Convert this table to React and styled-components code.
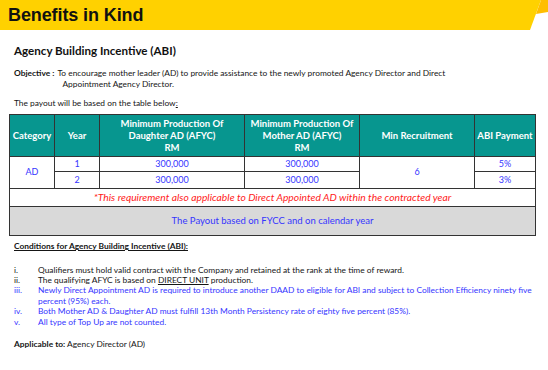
import styled, { createGlobalStyle } from "styled-components";

const GlobalStyle = createGlobalStyle`
  body {
    margin: 0;
    background: #fff;
    font-family: Lato, "Open Sans", sans-serif;
    color: #151515;
  }
`;

const Page = styled.div`
  width: 548px;
  height: 370px;
  overflow: hidden;
  background: #fff;
`;

const Banner = styled.header`
  position: relative;
  height: 30px;
  display: flex;
  align-items: center;
  padding-left: 8px;

  &::before {
    content: "";
    position: absolute;
    inset: 0;
    background: #ffd100;
    clip-path: polygon(0 0, 541px 0, 530px 30px, 0 30px);
  }

  &::after {
    content: "";
    position: absolute;
    top: 0;
    right: 0;
    width: 548px;
    height: 14px;
    background: #ffbe00;
    clip-path: polygon(541px 0, 548px 0, 548px 12px, 536px 14px);
  }
`;

const Title = styled.h1`
  position: relative;
  z-index: 1;
  margin: 0;
  font-family: "Liberation Sans", Arial, sans-serif;
  font-weight: 700;
  font-size: 18px;
  color: #111;
  letter-spacing: -0.1px;
`;

const Body = styled.main`
  padding: 16px 14px 0 14px;
  font-size: 8.4px;
  line-height: 10.5px;
`;

const Heading = styled.h2`
  margin: 0 0 11px;
  font-size: 11.6px;
  font-weight: 700;
  color: #111;
`;

const Objective = styled.div`
  display: grid;
  grid-template-columns: auto 1fr;
  line-height: 11px;
  margin-bottom: 8px;

  b {
    padding-right: 3px;
  }
  span {
    padding-left: 5px;
  }
`;

const Plain = styled.p`
  margin: 0;
  u {
    text-decoration: underline;
  }
`;

const Table = styled.table`
  border-collapse: collapse;
  width: 526px;
  margin: 6px 0 0 -5px;
  table-layout: fixed;
  text-align: center;
  border: 1.5px solid #333;

  th,
  td {
    border: 1px solid #333;
    padding: 0;
  }
`;

const Th = styled.th`
  background: #07968f;
  color: #fff;
  font-size: 9.5px;
  font-weight: 700;
  line-height: 12px;
  height: 41px;
`;

const Td = styled.td`
  color: #3535ff;
  font-size: 9px;
  height: ${(p) => p.$h || 14}px;
`;

const Note = styled.td`
  color: #ff1a1a;
  font-style: italic;
  font-size: 10.3px;
  height: 17px;
`;

const Summary = styled.td`
  background: #d9d9d9;
  color: #3535ff;
  font-size: 9.5px;
  height: 28px;
`;

const Conditions = styled.h3`
  margin: 5px 0 13px;
  font-size: 8.4px;
  font-weight: 700;
  text-decoration: underline;
`;

const List = styled.ol`
  margin: 0;
  padding: 0;
  list-style: none;
`;

const Item = styled.li`
  display: grid;
  grid-template-columns: 24px 1fr;
  color: ${(p) => (p.$blue ? "#3535ff" : "#151515")};
  line-height: 10.4px;
`;

const Applicable = styled.p`
  margin: 12px 0 0;
`;

const items = [
  ["i.", "Qualifiers must hold valid contract with the Company and retained at the rank at the time of reward.", false],
  ["ii.", null, false],
  ["iii.", "Newly Direct Appointment AD is required to introduce another DAAD to eligible for ABI and subject to Collection Efficiency ninety five percent (95%) each.", true],
  ["iv.", "Both Mother AD & Daughter AD must fulfill 13th Month Persistency rate of eighty five percent (85%).", true],
  ["v.", "All type of Top Up are not counted.", true],
];

export default function App() {
  return (
    <Page>
      <GlobalStyle />
      <Banner>
        <Title>Benefits in Kind</Title>
      </Banner>
      <Body>
        <Heading>Agency Building Incentive (ABI)</Heading>
        <Objective>
          <b>Objective :</b>
          <div>
            To encourage mother leader (AD) to provide assistance to the newly promoted Agency Director and Direct
            <br />
            <span>Appointment Agency Director.</span>
          </div>
        </Objective>
        <Plain>
          The payout will be based on the table below<u>:</u>
        </Plain>
        <Table>
          <colgroup>
            <col style={{ width: 45 }} />
            <col style={{ width: 45 }} />
            <col style={{ width: 145 }} />
            <col style={{ width: 115 }} />
            <col style={{ width: 115 }} />
            <col style={{ width: 61 }} />
          </colgroup>
          <thead>
            <tr>
              <Th>Category</Th>
              <Th>Year</Th>
              <Th>
                Minimum Production Of
                <br />
                Daughter AD (AFYC)
                <br />
                RM
              </Th>
              <Th>
                Minimum Production Of
                <br />
                Mother AD (AFYC)
                <br />
                RM
              </Th>
              <Th>Min Recruitment</Th>
              <Th>ABI Payment</Th>
            </tr>
          </thead>
          <tbody>
            <tr>
              <Td rowSpan={2}>AD</Td>
              <Td>1</Td>
              <Td>300,000</Td>
              <Td>300,000</Td>
              <Td rowSpan={2}>6</Td>
              <Td>5%</Td>
            </tr>
            <tr>
              <Td $h={16}>2</Td>
              <Td $h={16}>300,000</Td>
              <Td $h={16}>300,000</Td>
              <Td $h={16}>3%</Td>
            </tr>
            <tr>
              <Note colSpan={6}>
                *This requirement also applicable to Direct Appointed AD within the contracted year
              </Note>
            </tr>
            <tr>
              <Summary colSpan={6}>The Payout based on FYCC and on calendar year</Summary>
            </tr>
          </tbody>
        </Table>
        <Conditions>Conditions for Agency Building Incentive (ABI):</Conditions>
        <List>
          {items.map(([num, text, blue]) => (
            <Item key={num} $blue={blue}>
              <span>{num}</span>
              <span>
                {text ?? (
                  <>
                    The qualifying AFYC is based on <u>DIRECT UNIT</u> production.
                  </>
                )}
              </span>
            </Item>
          ))}
        </List>
        <Applicable>
          <b>Applicable to:</b> Agency Director (AD)
        </Applicable>
      </Body>
    </Page>
  );
}
